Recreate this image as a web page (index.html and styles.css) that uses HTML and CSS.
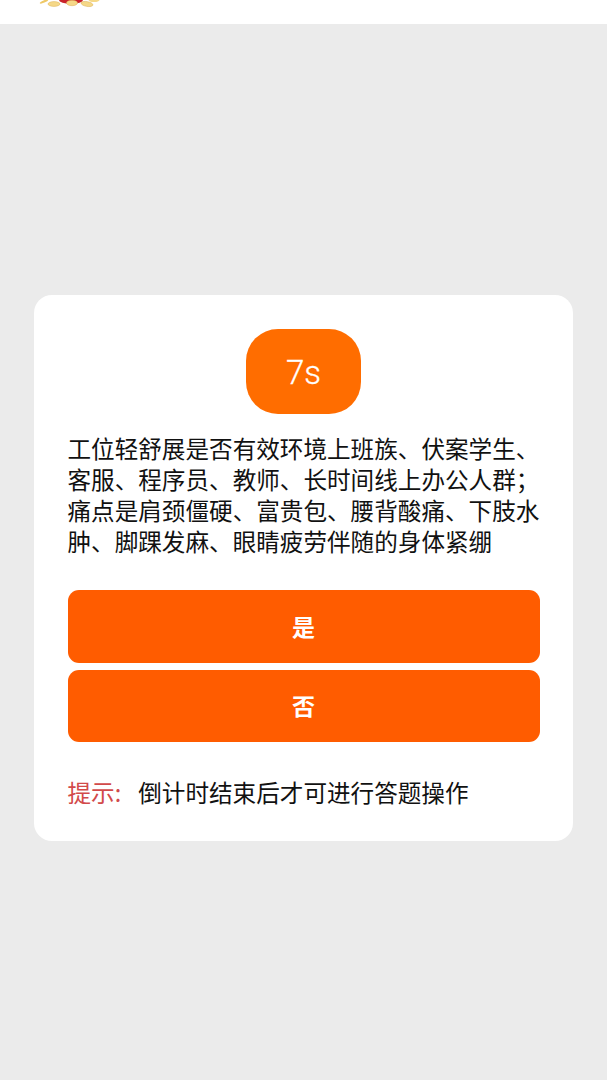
FILE: index.html
```html
<!DOCTYPE html>
<html lang="zh">
<head>
<meta charset="utf-8">
<title>答题</title>
<link rel="stylesheet" href="styles.css">
</head>
<body>
<header class="topbar">
  <svg class="logo" width="70" height="8" viewBox="0 0 70 8">
    <ellipse cx="35" cy="0" rx="12" ry="3.8" fill="#c8232a"/>
    <ellipse cx="8" cy="1.5" rx="4.5" ry="1.2" fill="#eec866" transform="rotate(-22 8 1.5)"/>
    <ellipse cx="18" cy="4" rx="6" ry="2.4" fill="#f5d888" stroke="#dcb055" stroke-width=".5"/>
    <ellipse cx="36" cy="3" rx="5.5" ry="2.7" fill="#f5d888" stroke="#dcb055" stroke-width=".5"/>
    <ellipse cx="51" cy="4" rx="6" ry="2.4" fill="#f5d888" stroke="#dcb055" stroke-width=".5" transform="rotate(10 51 4)"/>
    <ellipse cx="58" cy="0" rx="5.5" ry="2" fill="#f5d888"/>
  </svg>
</header>
<main class="page">
  <section class="card">
    <div class="timer-row"><div class="timer">7s</div></div>
    <p class="question">工位轻舒展是否有效环境上班族、伏案学生、客服、程序员、教师、长时间线上办公人群；痛点是肩颈僵硬、富贵包、腰背酸痛、下肢水肿、脚踝发麻、眼睛疲劳伴随的身体紧绷</p>
    <div class="actions">
      <button class="answer" type="button">是</button>
      <button class="answer" type="button">否</button>
    </div>
    <p class="hint"><span class="hint-label">提示:</span><span>倒计时结束后才可进行答题操作</span></p>
  </section>
</main>
</body>
</html>
```

FILE: styles.css
```css
* { box-sizing: border-box; }
html, body { margin: 0; padding: 0; }
body {
  width: 607px;
  height: 1080px;
  overflow: hidden;
  background: #ebebeb;
  font-family: "Noto Sans CJK SC", "Roboto", sans-serif;
  color: #111;
}
.topbar {
  height: 24px;
  background: #fff;
  padding-left: 36px;
}
.logo { display: block; }
.page { padding: 271px 34px 0 33.5px; }
.card {
  width: 539.5px;
  height: 546px;
  background: #fff;
  border-radius: 18px;
  padding: 34px 33.5px 0 34px;
}
.timer-row { display: flex; justify-content: center; }
.timer {
  width: 115px;
  height: 85px;
  padding-top: 2px;
  border-radius: 32px;
  background: #ff6d00;
  color: #fff;
  font-family: "Roboto", sans-serif;
  font-size: 33px;
  font-weight: 300;
  -webkit-text-stroke: 0.3px #fff;
  display: flex;
  align-items: center;
  justify-content: center;
}
.question {
  margin: 19px 0 0;
  font-size: 23.6px;
  line-height: 31px;
}
.actions {
  margin-top: 33px;
  display: flex;
  flex-direction: column;
  gap: 7px;
}
.answer {
  height: 72.5px;
  border: 0;
  border-radius: 11px;
  background: #ff5c00;
  color: #fff;
  font-family: inherit;
  font-size: 23px;
  font-weight: 700;
  padding: 0 0 1px;
}
.hint {
  margin: 35px 0 0;
  font-size: 23.6px;
  line-height: 31px;
  display: flex;
  gap: 17px;
}
.hint-label { color: #d24a4a; }
```
